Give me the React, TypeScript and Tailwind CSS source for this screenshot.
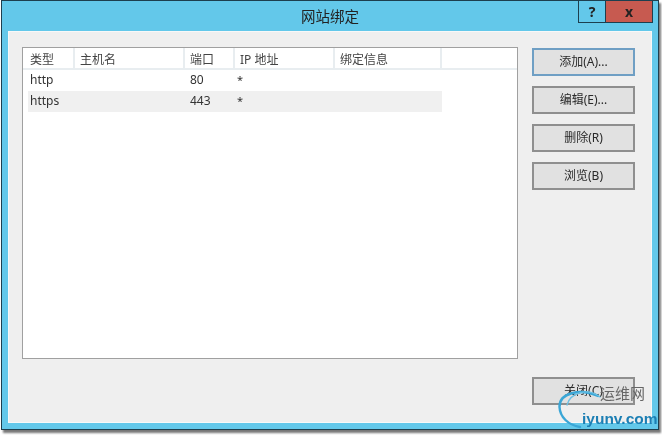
const fontStack = "font-['Noto_Sans','Noto_Sans_CJK_SC',sans-serif]";

const columns = [
  { label: "类型", width: "w-[50px]" },
  { label: "主机名", width: "w-[110px]" },
  { label: "端口", width: "w-[50px]" },
  { label: "IP 地址", width: "w-[100px]" },
  { label: "绑定信息", width: "w-[107px]" },
];

const rows = [
  { type: "http", port: "80", ip: "*", bg: "" },
  { type: "https", port: "443", ip: "*", bg: "bg-[#f0f0f0]" },
];

function DialogButton({ label, active, className }: { label: string; active?: boolean; className?: string }) {
  return (
    <button
      className={`flex h-[28px] w-[103px] items-center justify-center border-2 bg-[#e1e1e1] text-[12px] text-[#2a2a2a] ${active ? "border-[#6f9fc4]" : "border-[#8f8f8f]"} ${className ?? ""}`}
    >
      {label}
    </button>
  );
}

function Watermark() {
  return (
    <div className="absolute left-[558px] top-[385px] h-[50px] w-[104px]">
      <svg className="absolute left-0 top-0" width="50" height="50" viewBox="0 0 50 50" fill="none">
        <path d="M40 11C22 3 1 8 1.5 22C2 32 10 40 22 42" stroke="#3aa6d6" strokeWidth="2.4" strokeLinecap="round" />
        <path d="M9 20C12 8 30 2 42 12" stroke="#6cc0e4" strokeWidth="1.3" strokeLinecap="round" />
      </svg>
      <span className="absolute left-[42px] top-[-2px] text-[15px] leading-[20px] text-[#666]">运维网</span>
      <span className="absolute left-[24px] top-[24px] font-['Liberation_Sans',sans-serif] text-[15.5px] font-bold leading-[20px] text-[#1c7fb4]">
        iyunv.com
      </span>
    </div>
  );
}

export default function App() {
  return (
    <div className={`relative h-[435px] w-[662px] overflow-hidden bg-white blur-[0.4px] ${fontStack}`}>
      <div className="ml-px h-[430px] w-[658px] border border-[#1d3f4f] bg-[#63c8ea] shadow-[2px_3px_2px_#777]">
        <div className="relative flex h-[30px] justify-end pr-[5px]">
          <div className="absolute inset-x-0 top-[5px] text-center text-[14.5px] leading-[20px] text-[#222]">网站绑定</div>
          <div className="flex h-[22px] w-[28px] items-center justify-center border-x border-b border-[#1d3f4f] text-[14px] font-bold text-[#222]">?</div>
          <div className="flex h-[22px] w-[47px] items-center justify-center border-r border-b border-[#1d3f4f] bg-[#c75a50] text-[14px] font-bold text-[#222]">x</div>
        </div>
        <div className="mx-[6px] flex h-[392px] border border-[#f8f8f8] bg-[#efefef] pl-[13px] pt-[15px]">
          <div className="h-[312px] w-[496px] border border-[#a0a0a0] bg-white">
            <div className="flex h-[22px] border-b-2 border-[#e8edf0] pl-[2px]">
              {columns.map((c) => (
                <div key={c.label} className={`${c.width} border-r-2 border-[#e8edf0] pl-[5px] text-[12px] leading-[23px] text-[#444]`}>
                  {c.label}
                </div>
              ))}
            </div>
            {rows.map((r) => (
              <div key={r.type} className={`ml-[5px] flex h-[21px] w-[414px] text-[12px] leading-[20px] text-[#333] ${r.bg}`}>
                <div className="w-[157px] pl-[2px]">{r.type}</div>
                <div className="w-[50px] pl-[5px]">{r.port}</div>
                <div className="pl-[2px] text-[11px]">{r.ip}</div>
              </div>
            ))}
          </div>
          <div className="ml-[14px] flex flex-col pt-px">
            <DialogButton label="添加(A)..." active />
            <DialogButton label="编辑(E)..." className="mt-[10px]" />
            <DialogButton label="删除(R)" className="mt-[10px]" />
            <DialogButton label="浏览(B)" className="mt-[10px]" />
            <DialogButton label="关闭(C)" className="mt-auto mb-[17px]" />
          </div>
        </div>
      </div>
      <Watermark />
    </div>
  );
}
